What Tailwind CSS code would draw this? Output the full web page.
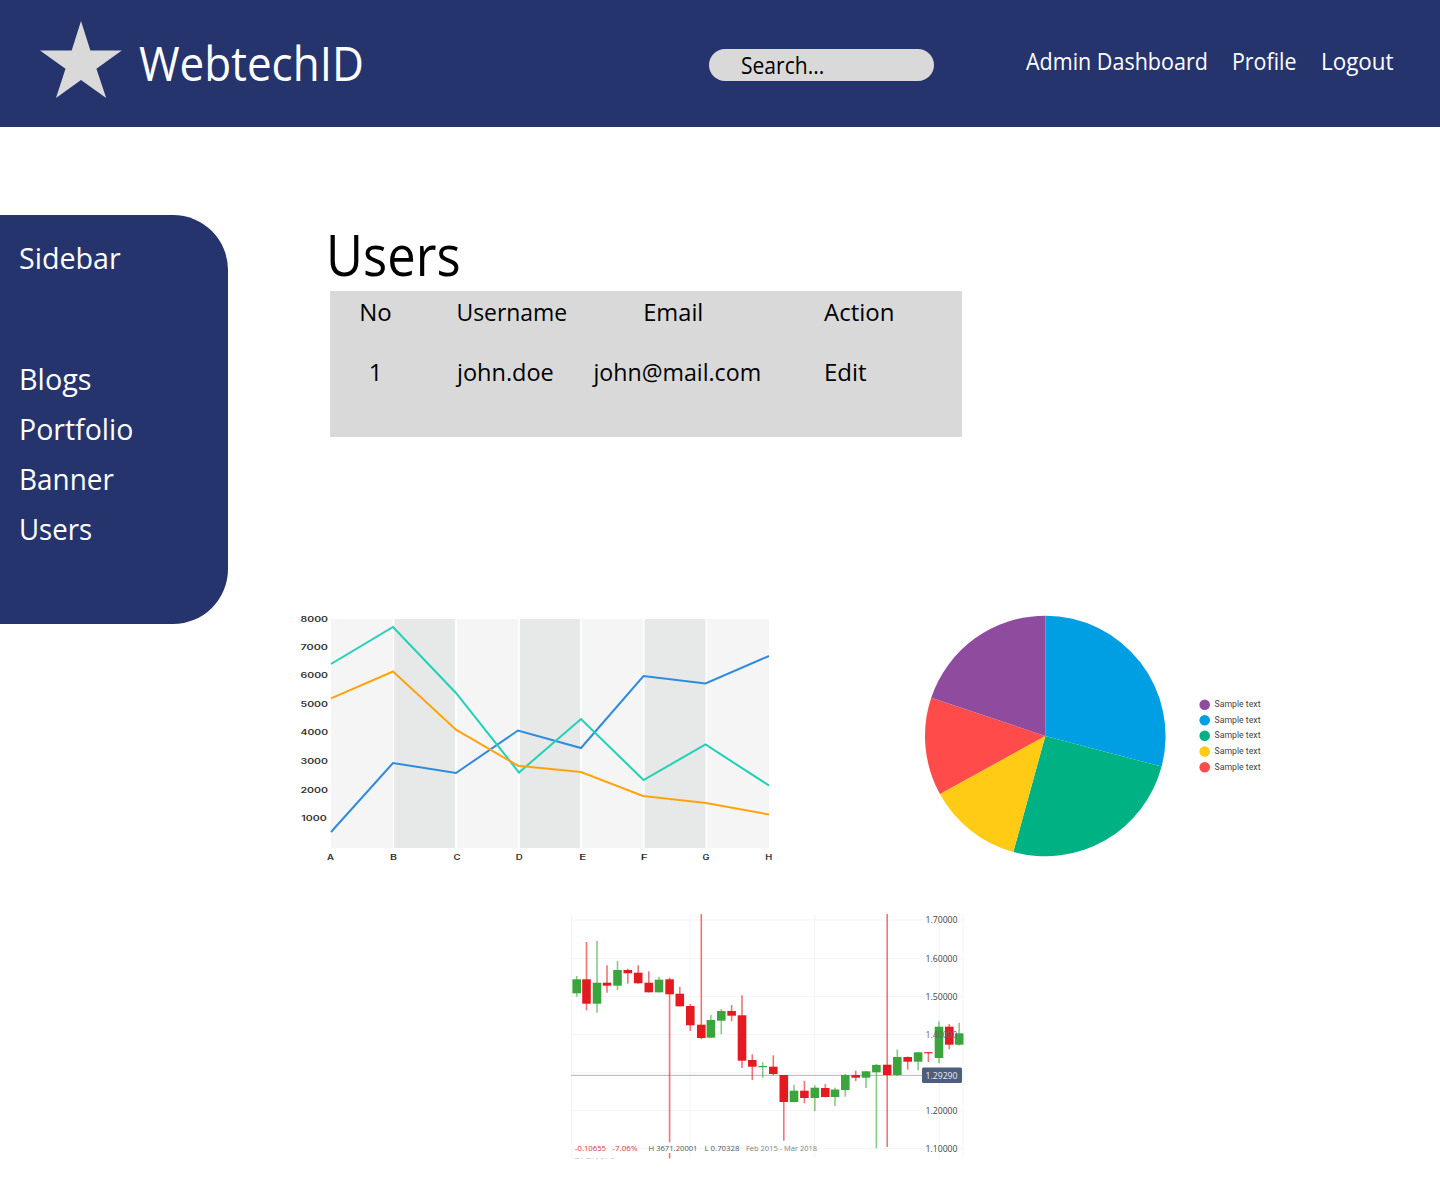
<!DOCTYPE html>
<html lang="en">
<head>
<meta charset="utf-8">
<title>WebtechID – Users</title>
<script src="https://cdn.jsdelivr.net/npm/@tailwindcss/browser@4"></script>
</head>
<body class="min-h-[1179px] overflow-x-hidden bg-white font-['Open_Sans',sans-serif] text-black">
<header class="flex h-[127px] items-start bg-[#26346d] text-white">
  <a href="#" class="flex w-[709px] items-start pl-10 pt-5">
    <svg class="h-20 w-[84px]" viewBox="40 20 84 80" fill="#d9d9d9"><path d="M81 21l9.4 29.5h31.4L96.4 68.7l9.8 29.3L81 80 56 98l9.5-29.3L40 50.500h31.700z"/></svg>
    <span class="ml-[15px] mt-[12.500px] origin-left scale-x-[0.936] whitespace-nowrap text-[47px] leading-[60px]">WebtechID</span>
  </a>
  <div class="mt-[49px] h-8 w-[225px] rounded-2xl bg-[#d9d9d9] pl-[32px] text-[23px] leading-8 text-black"><span class="inline-block origin-left scale-x-[0.915]">Search...</span></div>
  <nav class="ml-[91.5px] mt-[45px] flex whitespace-nowrap text-[23px] leading-8">
    <a href="#" class="w-[206px]"><span class="inline-block origin-left scale-x-[0.935]">Admin Dashboard</span></a>
    <a href="#" class="w-[89.5px]"><span class="inline-block origin-left scale-x-[0.93]">Profile</span></a>
    <a href="#"><span class="inline-block origin-left scale-x-[0.975]">Logout</span></a>
  </nav>
</header>

<div class="flex items-start pt-[88px]">
  <aside class="h-[409px] w-[228px] shrink-0 rounded-r-[55px] bg-[#26346d] pl-[18.5px] pt-[17.5px] text-[30px] leading-[50px] text-white">
    <h2 class="origin-left scale-x-[0.955]">Sidebar</h2>
    <ul class="mt-[71px]">
      <li class="origin-left scale-x-[0.96]">Blogs</li>
      <li class="origin-left scale-x-[0.95]">Portfolio</li>
      <li class="origin-left scale-x-[0.93]">Banner</li>
      <li class="origin-left scale-x-[0.92]">Users</li>
    </ul>
  </aside>

  <main class="min-w-0 flex-1">
    <section class="ml-[102px] h-[390px] w-[632px] pt-[9px]">
      <h1 class="-ml-[4px] origin-left scale-x-[0.89] text-[57px] leading-[60px]">Users</h1>
      <div class="mt-[7px] h-[146px] bg-[#d9d9d9] pt-[3px] text-[24px] leading-9">
        <div class="grid h-[60px] grid-cols-[125px_137px_231px_139px]">
          <div class="pr-[34px] text-center">No</div>
          <div class="origin-left scale-x-[0.955] pl-[1.5px]">Username</div>
          <div class="origin-left scale-x-[0.985] pl-[52px]">Email</div>
          <div class="pl-px">Action</div>
        </div>
        <div class="grid h-[60px] grid-cols-[125px_137px_231px_139px]">
          <div class="pr-[34px] text-center">1</div>
          <div class="origin-left scale-x-[0.98] pl-[2px]">john.doe</div>
          <div class="origin-left scale-x-[0.966] pl-[1.5px]">john@mail.com</div>
          <div class="pl-px">Edit</div>
        </div>
      </div>
    </section>

    <div class="ml-[62px] flex items-start">
      <svg id="lines" class="h-[265px] w-[490px]" viewBox="290 605 490 265"></svg>
      <div class="ml-[130px] flex">
        <svg class="h-[265px] w-[270px]" viewBox="910 605 270 265">
          <path fill="#009fe3" d="M1045.300 736V615.700A120.300 120.300 0 0 1 1161.600 766.600z"/>
          <path fill="#00b283" d="M1045.300 736L1161.600 766.600A120.300 120.300 0 0 1 1013.300 852z"/>
          <path fill="#ffcb14" d="M1045.300 736L1013.300 852A120.300 120.300 0 0 1 939.900 794z"/>
          <path fill="#ff4c4b" d="M1045.300 736L939.900 794A120.300 120.300 0 0 1 931.200 697.800z"/>
          <path fill="#8f4c9f" d="M1045.300 736L931.200 697.800A120.300 120.300 0 0 1 1045.300 615.700z"/>
        </svg>
        <svg id="legend" class="ml-[10px] mt-[85px] h-[90px] w-[80px]" viewBox="1190 690 80 90"></svg>
      </div>
    </div>

    <svg id="candles" class="ml-[332px] mt-[35px] h-[260px] w-[415px]" viewBox="560 905 415 260"></svg>
  </main>
</div>

<script>
const NS = 'http://www.w3.org/2000/svg';
function add(svg, tag, attrs, text) {
  const el = document.createElementNS(NS, tag);
  for (const k in attrs) el.setAttribute(k, attrs[k]);
  if (text) el.textContent = text;
  svg.append(el);
}
function label(svg, text, x, y, width, size, color, font, weight) {
  add(svg, 'text', { x, y, textLength: width, lengthAdjust: 'spacingAndGlyphs', 'font-size': size, fill: color, 'font-family': font, 'font-weight': weight || 400 }, text);
}

// Line chart
const lines = document.getElementById('lines');
const edges = [331, 393.5, 456, 519, 581, 643.7, 706.3, 769];
for (let i = 0; i < 7; i++) add(lines, 'rect', { x: edges[i], y: 619, width: edges[i + 1] - edges[i], height: 229, fill: [1, 3, 5].includes(i) ? '#e6e9e8' : '#f5f5f5' });
for (let i = 1; i < 7; i++) add(lines, 'rect', { x: edges[i] - 0.8, y: 619, width: 1.6, height: 229, fill: '#fff' });
[['#2e8be0', '331,832 393,763 456,773 518,730.5 581,748 643.5,676 705.5,683.5 769,656'],
 ['#1fd1b7', '331,664 393,627 456,693 519,772.5 581,719 643.500,780 705.5,744.5 769,785.5'],
 ['#ffa40d', '331,698.3 393,671.5 456,729.7 518,765.7 581,772 643,796 706,803 769,814.5']
].forEach(([stroke, points]) => add(lines, 'polyline', { points, stroke, fill: 'none', 'stroke-width': 2 }));
[619, 647, 675.5, 704, 732.5, 761, 790, 818.5].forEach((y, i) => {
  const last = i === 7;
  label(lines, String(8000 - i * 1000), last ? 301.3 : 300.500, y + 2.6, last ? 25.5 : 27.5, 7.2, '#333', 'Inter, sans-serif', 600);
});
[330.5, 393.5, 457, 519.3, 582.7, 644.3, 706, 768.800].forEach((x, i) => label(lines, 'ABCDEFGH'[i], x - 3.5, 860, 7, 7.2, '#333', 'Inter, sans-serif', 600));

// Pie legend
const legend = document.getElementById('legend');
[['#8f4c9f', 704.7], ['#009fe3', 720.2], ['#00b283', 735.8], ['#ffcb14', 751.5], ['#ff4c4b', 767.2]].forEach(([fill, cy]) => {
  add(legend, 'circle', { cx: 1204.7, cy, r: 5.3, fill });
  label(legend, 'Sample text', 1214.500, cy + 2.4, 46, 9, '#444', 'Roboto, sans-serif');
});

// Candlestick chart
const chart = document.getElementById('candles');
[920, 958.5, 996.5, 1034.5, 1072.5, 1110.5, 1148.5].forEach(y => add(chart, 'rect', { x: 571, y: y - 0.5, width: 392, height: 1, fill: '#f6f5f6' }));
[571.5, 690, 814.7, 939.3, 963].forEach(x => add(chart, 'rect', { x: x - 0.5, y: 914, width: 1, height: 244, fill: '#f5f4f5' }));
add(chart, 'rect', { x: 571, y: 1074.800, width: 355, height: 1.1, fill: '#b9b9c7' });

const G = '#3aa53c', R = '#e21b20';
// centre, wick top, body top, body bottom, wick bottom, colour
[[576.7,976,979.3,993.3,996.7,G],[586.5,942,979.3,1003.7,1010.3,R],[597,941,982.7,1003.7,1012.7,G],[607,965.3,982.7,985.7,992.7,R],
 [617.5,961,970,985.7,990,G],[627.8,968.7,970,973.3,983.7,R],[638.2,965.3,972.7,983.3,983.7,R],[648.8,971.3,982.7,992.3,992.5,R],
 [659,977,979.7,992.3,992.5,G],[669.6,977.7,979.3,994.3,1142.3,R],[679.8,987,993.7,1006.3,1006.5,R],[690.3,1004,1006,1025.3,1031,R],
 [701.3,914,1024.7,1038,1039.3,R],[710.9,1015,1020,1037.7,1037.8,G],[721.3,1009,1011,1020.7,1034.3,G],[731.6,1005,1011,1015.7,1021.3,R],
 [742,995.3,1015.3,1060.7,1068,R],[752.3,1054.3,1060,1066.7,1080,R],[762.7,1062.3,1066,1067.2,1077.7,G],[773.3,1055.3,1066.7,1074,1075.3,R],
 [783.8,1075,1075,1102,1140.7,R],[794,1085,1090.7,1102,1102.5,G],[804.4,1081,1090.7,1098,1103.3,R],[814.8,1085.3,1087.7,1098,1111,G],
 [825.3,1084,1088,1097,1097.3,R],[835,1087.7,1089.5,1097,1106,G],[845.3,1073.7,1075,1090,1096.7,G],[855.7,1070.7,1075,1077.7,1081,R],
 [866,1071,1071.3,1077.7,1088,G],[876.4,1064,1064.9,1072.3,1148.3,G],[887.2,914,1064.7,1075,1147,R],[897.3,1049.5,1057,1075,1076,G],
 [907.7,1056.5,1057,1061.7,1069.7,R],[918.1,1052,1052.3,1061.7,1070.3,G],[928.4,1052,1052.2,1053.3,1062,R],[939,1021.3,1026.7,1058,1063.3,G],
 [949.3,1024,1026.7,1044.7,1049.3,R],[959.2,1022.7,1033.3,1044.7,1045.5,G]
].forEach(([x, wt, bt, bb, wb, fill]) => {
  add(chart, 'rect', { x: x - 0.8, y: wt, width: 1.6, height: wb - wt, fill, opacity: 0.6 });
  add(chart, 'rect', { x: x - 4.3, y: bt, width: 8.6, height: bb - bt, fill });
});
add(chart, 'rect', { x: 668.800, y: 1153, width: 1.6, height: 5.5, fill: R, opacity: 0.6 });

add(chart, 'rect', { x: 922, y: 1067.500, width: 40, height: 15.5, rx: 1.5, fill: '#4d5d7b' });
[['1.70000', 920], ['1.60000', 958.5], ['1.50000', 997], ['1.40000', 1035], ['1.29290', 1075.3], ['1.20000', 1110.7], ['1.10000', 1149]].forEach(([t, y]) =>
  label(chart, t, 925.5, y + 3.2, 32, 8.6, t === '1.29290' ? '#e9ecf2' : t === '1.40000' ? '#666' : '#444', 'Open Sans, sans-serif', 500));
label(chart, '-0.10655', 575, 1150.8, 31, 7.5, '#cc3a40', 'Open Sans, sans-serif', 500);
label(chart, '-7.06%', 612.5, 1150.8, 25, 7.5, '#cc3a40', 'Open Sans, sans-serif', 500);
label(chart, 'H 3671.20001', 648.5, 1150.8, 49, 7.5, '#555', 'Open Sans, sans-serif', 500);
label(chart, 'L 0.70328', 704.5, 1150.8, 35, 7.5, '#555', 'Open Sans, sans-serif', 500);
label(chart, 'Feb 2015 - Mar 2018', 746, 1150.8, 71, 7.5, '#808080', 'Open Sans, sans-serif');
// Upper edge of the next caption row, cut off by the chart frame
[[575, 4], [581, 2], [586, 5], [593, 1], [596, 2], [601, 3], [606, 1], [611, 3]].forEach(([x, width]) =>
  add(chart, 'rect', { x, y: 1158, width, height: 0.8, fill: '#ccc' }));
</script>
</body>
</html>
